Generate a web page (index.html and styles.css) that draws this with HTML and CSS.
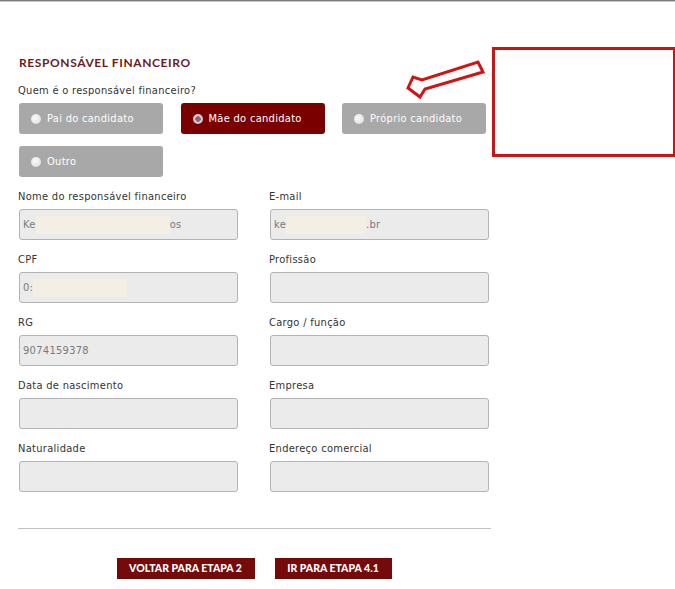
FILE: index.html
```html
<!DOCTYPE html>
<html lang="pt-BR">
<head>
<meta charset="utf-8">
<title>Responsável financeiro</title>
<link rel="stylesheet" href="styles.css">
</head>
<body>
<div class="topline"></div>
<main class="form">
  <h2 class="title">RESPONSÁVEL FINANCEIRO</h2>
  <div class="question">Quem é o responsável financeiro?</div>
  <div class="options">
    <div class="opt"><span class="dot"></span>Pai do candidato</div>
    <div class="opt sel"><span class="dot"></span>Mãe do candidato</div>
    <div class="opt"><span class="dot"></span>Próprio candidato</div>
    <div class="opt"><span class="dot"></span>Outro</div>
  </div>
  <div class="fields">
    <div class="field"><label>Nome do responsável financeiro</label><div class="input">Ke<span class="mask m1"></span>os</div></div>
    <div class="field"><label>E-mail</label><div class="input">ke<span class="mask m2"></span>.br</div></div>
    <div class="field"><label>CPF</label><div class="input">0:<span class="mask m3"></span></div></div>
    <div class="field"><label>Profissão</label><div class="input"></div></div>
    <div class="field"><label>RG</label><div class="input">9074159378</div></div>
    <div class="field"><label>Cargo / função</label><div class="input"></div></div>
    <div class="field"><label>Data de nascimento</label><div class="input"></div></div>
    <div class="field"><label>Empresa</label><div class="input"></div></div>
    <div class="field"><label>Naturalidade</label><div class="input"></div></div>
    <div class="field"><label>Endereço comercial</label><div class="input"></div></div>
  </div>
  <hr class="rule">
  <div class="actions">
    <button class="btn">VOLTAR PARA ETAPA 2</button>
    <button class="btn">IR PARA ETAPA 4.1</button>
  </div>
</main>
<div class="annot-box"></div>
<svg class="annot-arrow" width="100" height="50" viewBox="400 55 100 50">
  <polygon points="408,88 413,77 422,80 478,62 483,72 425,89 420,97" fill="none" stroke="#d01414" stroke-width="3" stroke-linejoin="miter"/>
</svg>
</body>
</html>
```
FILE: styles.css
```css
html, body { margin: 0; padding: 0; background: #fff; }
body {
  font-family: "DejaVu Sans Condensed", "DejaVu Sans", sans-serif;
  font-size: 11px;
  letter-spacing: 0.3px;
  color: #333;
  position: relative;
  width: 675px;
  height: 589px;
  overflow: hidden;
}
.topline { height: 1px; background: #7d7d7d; border-bottom: 1px solid #c8c8c8; }
.form { padding: 0 18px; width: 473px; }
.title {
  margin: 54px 0 0 1px;
  font-family: Lato, "Open Sans", sans-serif;
  font-weight: 700;
  font-size: 12px;
  line-height: 14px;
  letter-spacing: 0.6px;
  color: #6a1c22;
}
.question { margin-top: 14px; line-height: 14px; }
.options {
  margin: 5px 0 0 1px;
  display: grid;
  grid-template-columns: 144px 144px 144px;
  column-gap: 17.5px;
  row-gap: 12px;
}
.opt {
  height: 31px;
  border-radius: 3px;
  background: #a8a8a8;
  color: #fff;
  display: flex;
  align-items: center;
  padding-left: 12px;
  gap: 6px;
  box-sizing: border-box;
}
.opt.sel { background: #7a0000; }
.dot {
  width: 10px; height: 10px; border-radius: 50%;
  background: radial-gradient(circle at 40% 40%, #fbfbfb, #d9d9d9);
  box-sizing: border-box;
}
.opt.sel .dot {
  background: radial-gradient(circle, #8f6478 0 2.5px, #d8d0d4 3px, #bdb5ba);
}
.fields {
  margin-top: 13px;
  display: grid;
  grid-template-columns: 220px 220px;
  column-gap: 31px;
  row-gap: 13px;
}
.field label { display: block; line-height: 14px; }
.input {
  margin: 5px 0 0 1px;
  width: 219px;
  height: 31px;
  box-sizing: border-box;
  border: 1px solid #b3b3b3;
  border-radius: 3px;
  background: #ebebeb;
  color: #7a7a7a;
  padding-left: 3px;
  display: flex;
  align-items: center;
  white-space: nowrap;
}
.mask { display: inline-block; height: 18px; background: #f3efe4; }
.m1 { width: 134px; }
.m2 { width: 80px; }
.m3 { width: 94px; }
.rule { margin: 36px 0 0 0; border: 0; border-top: 1px solid #c2c2c2; height: 0; }
.actions {
  margin-top: 29px;
  display: flex;
  justify-content: center;
  gap: 20px;
  padding-right: 1px;
}
.btn {
  height: 21px;
  border: 0;
  border-radius: 0;
  background: #750a0a;
  color: #fff;
  font-family: Lato, "Open Sans", sans-serif;
  font-weight: 900;
  font-size: 10.5px;
  letter-spacing: 0;
  padding: 0;
  line-height: 21px;
}
.btn:first-child { width: 138px; }
.btn:last-child { width: 117px; }
.annot-box {
  position: absolute;
  left: 492px; top: 47px;
  width: 183px; height: 110px;
  box-sizing: border-box;
  border: 3px solid #cc1414;
  border-right-width: 2px;
}
.annot-arrow { position: absolute; left: 400px; top: 55px; }
```
